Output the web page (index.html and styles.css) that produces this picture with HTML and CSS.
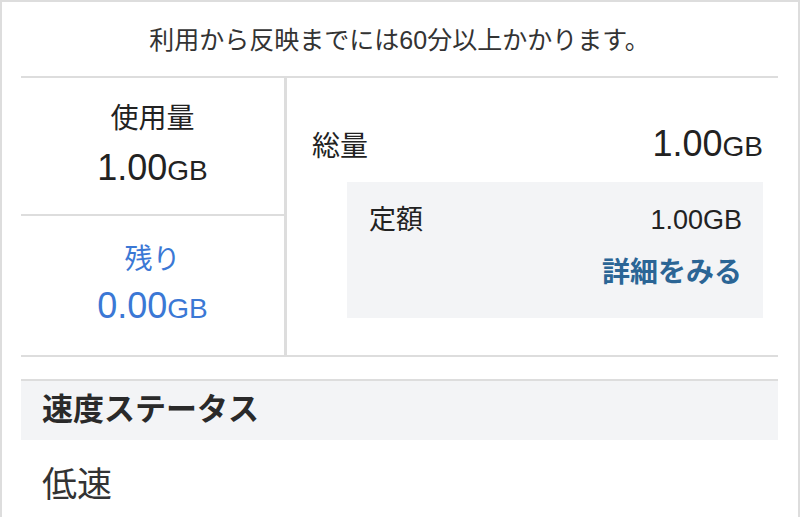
FILE: index.html
```html
<!DOCTYPE html>
<html lang="ja">
<head>
  <meta charset="UTF-8" />
  <title>データ使用量</title>
  <link rel="stylesheet" href="styles.css">
</head>
<body>
  <div class="frame">
    <p class="note">利用から反映までには60分以上かかります。</p>

    <div class="usage">
      <div class="left-col">
        <div class="cell">
          <div class="cell-label">使用量</div>
          <div class="amount">1.00<span class="unit">GB</span></div>
        </div>
        <div class="cell remain">
          <div class="cell-label">残り</div>
          <div class="amount">0.00<span class="unit">GB</span></div>
        </div>
      </div>

      <div class="right-col">
        <div class="total-row">
          <span class="total-label">総量</span>
          <span class="amount">1.00<span class="unit">GB</span></span>
        </div>
        <div class="plan-box">
          <div class="plan-row">
            <span>定額</span>
            <span>1.00GB</span>
          </div>
          <a class="detail-link" href="#">詳細をみる</a>
        </div>
      </div>
    </div>

    <h3 class="section-head">速度ステータス</h3>
    <p class="speed">低速</p>
  </div>
</body>
</html>
```

FILE: styles.css
```css
html, body { margin: 0; background: #fff; }
body {
  font-family: "Liberation Sans", "Noto Sans CJK JP", sans-serif;
  color: #222;
}
.frame {
  border: 2px solid #ddd; border-bottom: none;
  padding: 0 20px 0 19px; height: 515px; overflow: hidden;
}
.note {
  margin: 0; height: 74px; line-height: 76px;
  text-align: center; font-size: 25px; color: #333;
}

.usage {
  display: grid; grid-template-columns: 266px 1fr;
  border-top: 2px solid #ddd; border-bottom: 2px solid #ddd;
  height: 277px;
}
.left-col { display: flex; flex-direction: column; border-right: 3px solid #ddd; }
.cell {
  height: 138px; box-sizing: border-box; padding-top: 23px;
  text-align: center;
}
.cell:first-child { border-bottom: 2px solid #ddd; }
.cell-label { font-size: 28px; line-height: 36px; }
.amount { font-size: 36px; line-height: 52px; }
.cell .amount { margin-top: 5px; }
.unit { font-size: 28px; }
.remain { height: 139px; padding-top: 26px; color: #3b78d5; }
.remain .amount { margin-top: 2px; }

.right-col { padding: 40px 15px 0 25px; }
.total-row {
  display: flex; justify-content: space-between; align-items: baseline;
  line-height: 40px;
}
.total-label { font-size: 28px; }
.plan-box {
  margin: 9px 0 0 35px; height: 136px; box-sizing: border-box;
  background: #f3f4f6; padding: 21px 21px 0 22px;
  display: flex; flex-direction: column;
}
.plan-row {
  display: flex; justify-content: space-between;
  font-size: 27px; line-height: 34px;
}
.detail-link {
  align-self: flex-end; margin-top: 18px;
  font-size: 28px; line-height: 36px; font-weight: bold;
  color: #2b6595; text-decoration: none;
}

.section-head {
  margin: 22px 0 0; border-top: 2px solid #ddd;
  background: #f3f4f6; height: 59px; line-height: 58px;
  padding-left: 21px; font-size: 31px; font-weight: bold; color: #2a2a2a;
}
.speed { margin: 20px 0 0 21px; font-size: 35px; line-height: 50px; color: #333; }
```
